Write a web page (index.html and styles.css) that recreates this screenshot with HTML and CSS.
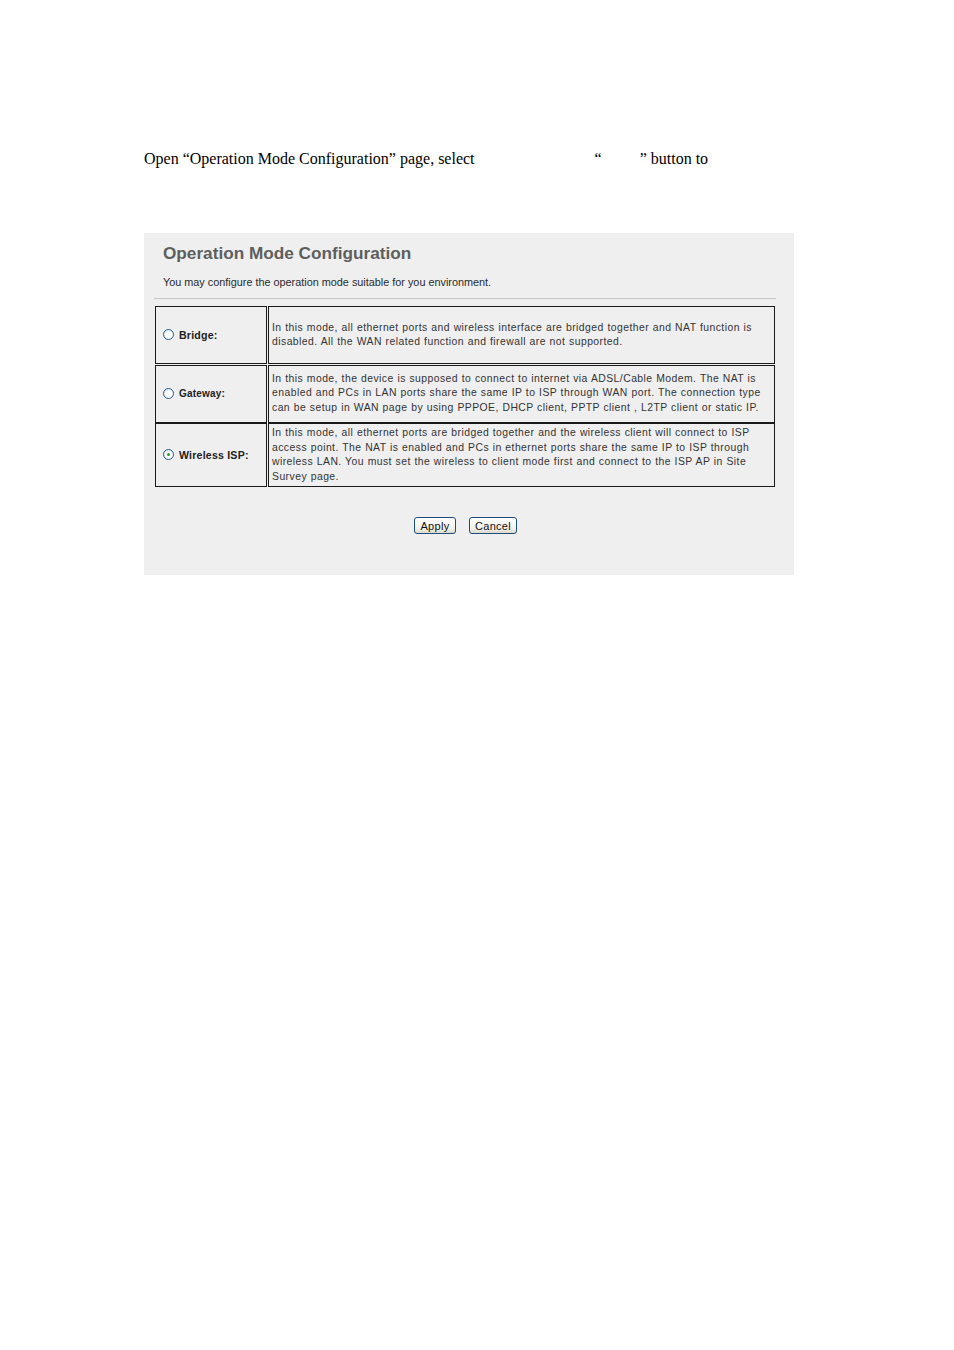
FILE: index.html
```html
<!DOCTYPE html>
<html>
<head>
<meta charset="utf-8">
<link rel="stylesheet" href="styles.css">
</head>
<body>
<p class="intro">Open “Operation Mode Configuration” page, select<span class="gap1"></span>“<span class="gap2"></span>” button to</p>
<div class="panel">
  <h1 class="title">Operation Mode Configuration</h1>
  <p class="sub">You may configure the operation mode suitable for you environment.</p>
  <div class="rule"></div>
  <div class="modes">
    <div class="cell label"><span class="radio"></span><span class="lbl">Bridge:</span></div>
    <div class="cell desc">In this mode, all ethernet ports and wireless interface are bridged together and NAT function is disabled. All the WAN related function and firewall are not supported.</div>
    <div class="cell label"><span class="radio"></span><span class="lbl small">Gateway:</span></div>
    <div class="cell desc">In this mode, the device is supposed to connect to internet via ADSL/Cable Modem. The NAT is enabled and PCs in LAN ports share the same IP to ISP through WAN port. The connection type can be setup in WAN page by using PPPOE, DHCP client, PPTP client , L2TP client or static IP.</div>
    <div class="cell label"><span class="radio on"></span><span class="lbl">Wireless ISP:</span></div>
    <div class="cell desc">In this mode, all ethernet ports are bridged together and the wireless client will connect to ISP access point. The NAT is enabled and PCs in ethernet ports share the same IP to ISP through wireless LAN. You must set the wireless to client mode first and connect to the ISP AP in Site Survey page.</div>
  </div>
  <div class="buttons">
    <span class="btn apply">Apply</span>
    <span class="btn cancel">Cancel</span>
  </div>
</div>
</body>
</html>
```
FILE: styles.css
```css
html, body {
  margin: 0;
  padding: 0;
  background: #ffffff;
}
.intro {
  margin: 0;
  padding: 150px 0 0 144px;
  font-family: "Liberation Serif", "Times New Roman", serif;
  font-size: 16px;
  line-height: 18px;
  color: #000;
  white-space: nowrap;
}
.gap1 { display: inline-block; width: 120px; }
.gap2 { display: inline-block; width: 38px; }
.panel {
  margin: 65px 0 0 144px;
  width: 650px;
  height: 342px;
  box-sizing: border-box;
  background: #efefef;
  padding-top: 9px;
  font-family: "Liberation Sans", Arial, sans-serif;
}
.title {
  margin: 0 0 0 19px;
  font-size: 17.2px;
  font-weight: bold;
  color: #5e5e5e;
  line-height: 22px;
}
.sub {
  margin: 11px 0 0 19px;
  font-size: 10.85px;
  line-height: 14px;
  color: #2a2a2a;
}
.rule {
  margin: 9px 0 0 10px;
  width: 622px;
  height: 1px;
  background: #c4c4c4;
}
.modes {
  margin: 7px 0 0 11px;
  display: grid;
  grid-template-columns: 112px 507px;
  grid-template-rows: 58px 58px 64px;
  column-gap: 1px;
  row-gap: 0.6px;
}
.cell {
  border: 1px solid #1a1a1a;
  box-sizing: border-box;
  display: flex;
  align-items: center;
}
.label {
  padding-left: 7px;
  gap: 5px;
}
.lbl {
  font-size: 10.6px;
  font-weight: bold;
  color: #222;
  letter-spacing: 0.2px;
}
.lbl.small { font-size: 10px; }
.radio {
  width: 11px;
  height: 11px;
  box-sizing: border-box;
  border-radius: 50%;
  border: 1px solid #1f5a96;
  background: radial-gradient(circle at 60% 60%, #ffffff 35%, #d6dde6 100%);
  position: relative;
  margin-top: -1px;
}
.radio.on::after {
  content: "";
  position: absolute;
  left: 3px;
  top: 3px;
  width: 3px;
  height: 3px;
  border-radius: 50%;
  background: #2a9a2a;
}
.desc {
  padding: 0 3px 0 3px;
  font-size: 10.4px;
  line-height: 14.5px;
  color: #333;
  letter-spacing: 0.45px;
  word-spacing: 0.3px;
}
.buttons {
  display: flex;
  justify-content: center;
  gap: 13px;
  width: 650px;
  margin-top: 30px;
  box-sizing: border-box;
  padding-left: 2px;
  padding-right: 9px;
}
.btn {
  display: inline-flex;
  align-items: center;
  justify-content: center;
  height: 17px;
  box-sizing: border-box;
  border: 1px solid #1c4d80;
  border-radius: 3px;
  background: linear-gradient(#ffffff, #f2f1ea 70%, #dcd9cc);
  font-size: 11px;
  color: #111;
  letter-spacing: 0.3px;
}
.apply { width: 42px; }
.cancel { width: 48px; }
```
